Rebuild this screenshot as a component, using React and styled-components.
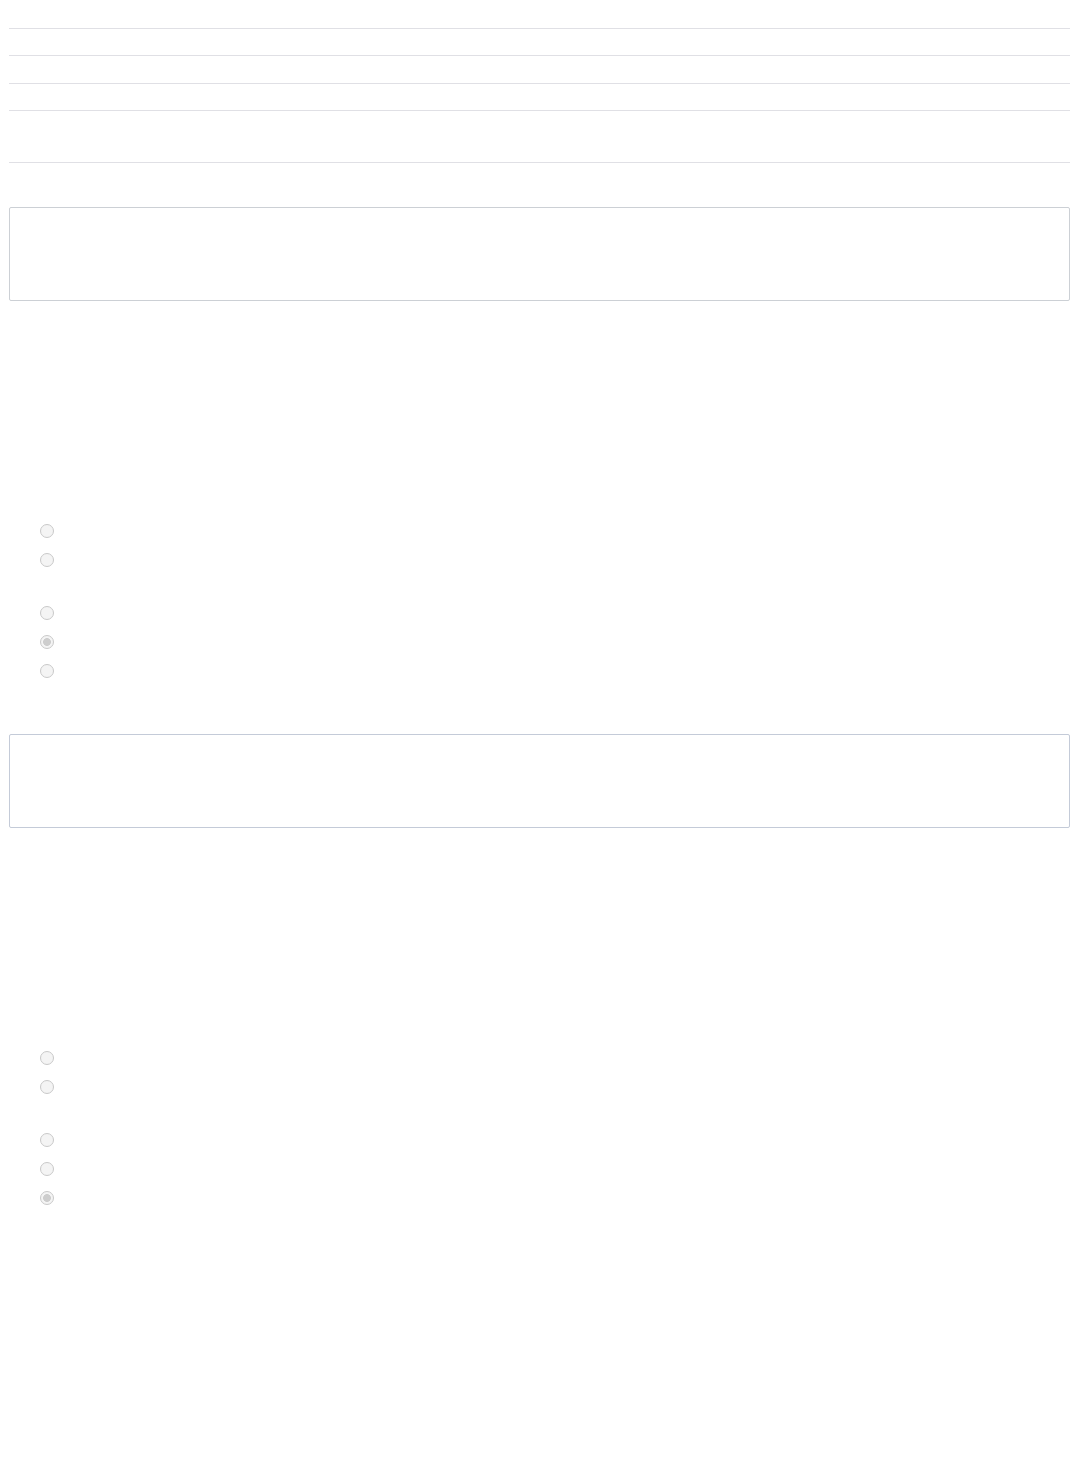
import React from "react";
import styled, { createGlobalStyle } from "styled-components";

const Global = createGlobalStyle`
  html, body { margin: 0; padding: 0; background: #ffffff; }
  body { font-family: "Liberation Sans", Arial, sans-serif; font-size: 14px; color: #333; }
`;

const Page = styled.div`
  padding: 28px 8px 0 9px;
  width: 1078px;
  box-sizing: border-box;
`;

const List = styled.div`
  display: flex;
  flex-direction: column;
`;

const Row = styled.div`
  height: ${(p) => p.$h}px;
  border-top: 1px solid #e0e0e5;
  box-sizing: border-box;
`;

const Section = styled.section`
  display: flex;
  flex-direction: column;
  margin-top: ${(p) => p.$top}px;
`;

const Box = styled.div`
  height: 94px;
  box-sizing: border-box;
  border: 1px solid ${(p) => p.$border};
  border-radius: 2px;
  background: #fff;
`;

const Options = styled.div`
  display: flex;
  flex-direction: column;
  margin-top: 215px;
  padding-left: 26px;
`;

const Group = styled.div`
  display: flex;
  flex-direction: column;
  & + & { margin-top: 24px; }
`;

const Option = styled.label`
  height: 29px;
  display: flex;
  align-items: center;
`;

const Radio = styled.input.attrs({ type: "radio", disabled: true })`
  appearance: none;
  -webkit-appearance: none;
  width: 14px;
  height: 14px;
  margin: 0 0 0 5px;
  box-sizing: border-box;
  border: 1px solid #c9c9c9;
  border-radius: 50%;
  background: #f4f4f4;
  &:checked {
    background: radial-gradient(circle, #cdcdcd 0 3.6px, #f4f4f4 4.2px);
  }
`;

function Question({ name, checked, top, border }) {
  const groups = [[0, 1], [2, 3, 4]];
  return (
    <Section $top={top}>
      <Box $border={border} />
      <Options>
        {groups.map((g, gi) => (
          <Group key={gi}>
            {g.map((i) => (
              <Option key={i}>
                <Radio name={name} defaultChecked={i === checked} />
              </Option>
            ))}
          </Group>
        ))}
      </Options>
    </Section>
  );
}

export default function App() {
  return (
    <>
      <Global />
      <Page>
        <List>
          <Row $h={27} />
          <Row $h={28} />
          <Row $h={27} />
          <Row $h={52} />
          <Row $h={1} />
        </List>
        <Question name="q1" checked={3} top={44} border="#ccd0d5" />
        <Question name="q2" checked={4} top={49} border="#c4cbd8" />
      </Page>
    </>
  );
}
